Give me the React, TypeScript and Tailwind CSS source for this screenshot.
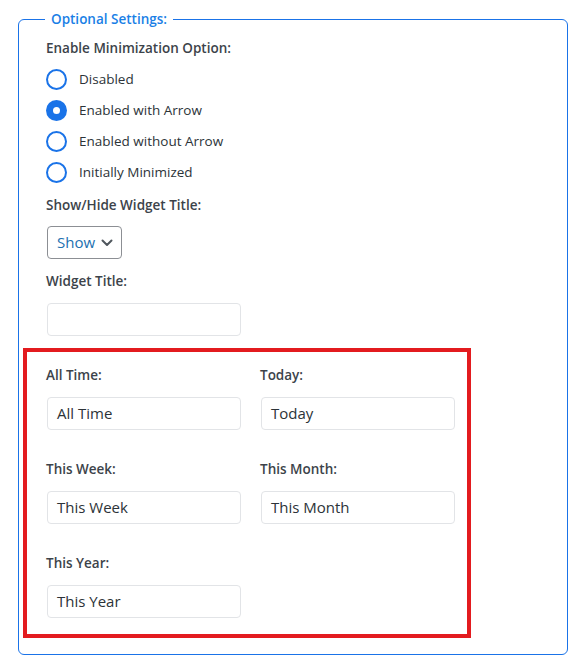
import React from 'react';

const FONT = { fontFamily: '"Open Sans", "Noto Sans", sans-serif' };

const radioOptions = [
  { label: 'Disabled', checked: false },
  { label: 'Enabled with Arrow', checked: true },
  { label: 'Enabled without Arrow', checked: false },
  { label: 'Initially Minimized', checked: false },
];

const periodFields = ['All Time', 'Today', 'This Week', 'This Month', 'This Year'];

const FieldLabel = ({ children }: { children: React.ReactNode }) => (
  <div className="h-[20px] text-[13.5px] leading-[20px] font-semibold text-[#3c434a]">{children}</div>
);

const TextBox = ({ value }: { value?: string }) => (
  <div className="ml-px w-[194px] h-[33px] border border-[#e2e4e7] rounded-[4px] bg-white pl-[9px] flex items-center text-[15px] text-[#2c3338]">
    {value}
  </div>
);

const Radio = ({ checked }: { checked: boolean }) =>
  checked ? (
    <span className="w-[21px] h-[21px] rounded-full bg-[#1a73e8] flex items-center justify-center">
      <span className="w-[7px] h-[7px] rounded-full bg-white" />
    </span>
  ) : (
    <span className="w-[21px] h-[21px] rounded-full border-2 border-[#1a73e8] bg-white" />
  );

export default function App() {
  return (
    <div className="min-h-[672px] bg-white pt-[9px]" style={FONT}>
      <fieldset className="ml-[18px] w-[550px] border border-[#1a73e8] rounded-[6px] pl-[27px] pb-[16px]">
        <legend className="-ml-px px-[6px] text-[13.5px] leading-[20px] font-semibold text-[#1a7fe6]">
          Optional Settings:
        </legend>

        <div className="pt-[9px]">
          <FieldLabel>Enable Minimization Option:</FieldLabel>
        </div>
        <div className="mt-[6px] flex flex-col">
          {radioOptions.map((opt) => (
            <div key={opt.label} className="h-[31px] flex items-center gap-[12px]">
              <Radio checked={opt.checked} />
              <span className="text-[13.5px] text-[#2c3338]">{opt.label}</span>
            </div>
          ))}
        </div>

        <div className="mt-[7px]">
          <FieldLabel>Show/Hide Widget Title:</FieldLabel>
        </div>
        <div className="mt-[11px] ml-px w-[75px] h-[33px] border border-[#8c8f94] rounded-[4px] flex items-center justify-between pl-[9px] pr-[8px]">
          <span className="text-[15px] text-[#2271b1]">Show</span>
          <svg width="12" height="8" viewBox="0 0 12 8" fill="none">
            <path d="M1.5 1.5L6 6L10.5 1.5" stroke="#50575e" strokeWidth="2" strokeLinecap="round" strokeLinejoin="round" />
          </svg>
        </div>

        <div className="mt-[12px]">
          <FieldLabel>Widget Title:</FieldLabel>
        </div>
        <div className="mt-[12px]">
          <TextBox />
        </div>

        <div className="mt-[12px] -ml-[23px] w-[448px] border-4 border-[#e31b1f] pl-[19px] pt-[13px] pb-[16px]">
          <div className="grid grid-cols-[195px_196px] gap-x-[19px] gap-y-[29px]">
            {periodFields.map((f) => (
              <div key={f}>
                <FieldLabel>{f}:</FieldLabel>
                <div className="mt-[12px]">
                  <TextBox value={f} />
                </div>
              </div>
            ))}
          </div>
        </div>
      </fieldset>
    </div>
  );
}
